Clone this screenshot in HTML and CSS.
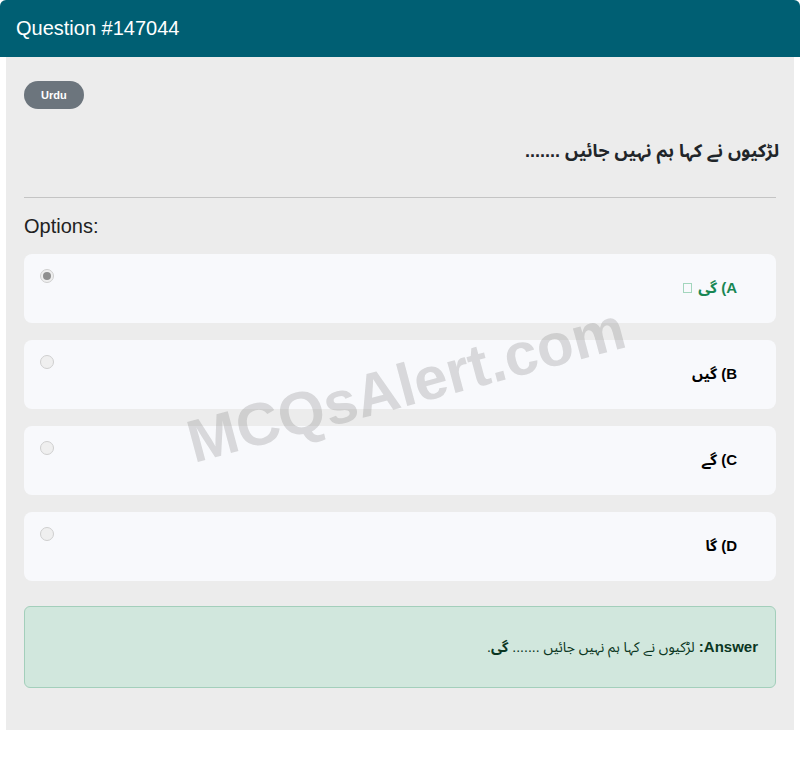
FILE: index.html
```html
<!DOCTYPE html>
<html lang="en">
<head>
<meta charset="utf-8">
<title>Question #147044</title>
<link rel="stylesheet" href="styles.css">
</head>
<body>
<div class="card">
  <div class="card-header">Question #147044</div>
  <div class="card-body">
    <div class="badge-row"><span class="badge">Urdu</span></div>
    <div class="question" dir="rtl">لڑکیوں نے کہا ہم نہیں جائیں .......</div>
    <hr class="divider">
    <div class="options-title">Options:</div>
    <div class="options">
      <div class="option">
        <span class="radio checked"></span>
        <div class="label correct" dir="rtl">A) گی <span class="tofu"></span></div>
      </div>
      <div class="option">
        <span class="radio"></span>
        <div class="label" dir="rtl">B) گیں</div>
      </div>
      <div class="option">
        <span class="radio"></span>
        <div class="label" dir="rtl">C) گے</div>
      </div>
      <div class="option">
        <span class="radio"></span>
        <div class="label" dir="rtl">D) گا</div>
      </div>
    </div>
    <div class="answer" dir="rtl"><strong>Answer:</strong> <span class="answer-text">لڑکیوں نے کہا ہم نہیں جائیں ....... <strong>گی</strong>.</span></div>
    <div class="watermark">MCQsAlert.com</div>
  </div>
</div>
</body>
</html>
```
FILE: styles.css
```css
html, body {
  margin: 0;
  padding: 0;
  background: #ffffff;
}
body {
  font-family: "Liberation Sans", "Noto Sans Arabic", "Noto Naskh Arabic", "DejaVu Sans", Arial, sans-serif;
  color: #212529;
}
.card {
  width: 800px;
}
.card-header {
  height: 57px;
  line-height: 57px;
  background: #005f73;
  color: #ffffff;
  font-size: 20px;
  padding-left: 16px;
  border-radius: 6px 6px 0 0;
  box-sizing: border-box;
}
.card-body {
  position: relative;
  margin: 0 6px;
  background: #ececec;
  padding: 24px 18px 42px;
  display: flex;
  flex-direction: column;
}
.badge-row {
  display: flex;
}
.badge {
  display: inline-block;
  background: #6c757d;
  color: #ffffff;
  font-size: 11px;
  font-weight: bold;
  height: 28px;
  line-height: 28px;
  padding: 0 17px;
  border-radius: 14px;
}
.question {
  margin-top: 29px;
  font-size: 18px;
  line-height: 27px;
  font-weight: bold;
  text-align: right;
  color: #212529;
  margin-right: -3px;
}
.divider {
  margin: 32px 0 0;
  border: 0;
  border-top: 1px solid #c4c4c4;
  height: 0;
}
.options-title {
  margin-top: 16px;
  font-size: 20px;
  line-height: 24px;
  color: #222222;
}
.options {
  margin-top: 16px;
  display: flex;
  flex-direction: column;
  gap: 17px;
}
.option {
  height: 69px;
  box-sizing: border-box;
  background: #f8f9fc;
  border-radius: 8px;
  padding: 15px 39px 0 16px;
  display: flex;
  align-items: flex-start;
}
.radio {
  flex: none;
  width: 14px;
  height: 14px;
  box-sizing: border-box;
  border: 1px solid #cfcfcf;
  border-radius: 50%;
  background: #efefef;
  display: flex;
  align-items: center;
  justify-content: center;
}
.radio.checked::after {
  content: "";
  width: 8px;
  height: 8px;
  border-radius: 50%;
  background: #8f8f8f;
}
.label {
  flex: 1;
  margin-top: 9px;
  font-size: 15px;
  line-height: 20px;
  font-weight: bold;
  text-align: right;
  color: #000000;
}
.label.correct {
  color: #198754;
}
.tofu {
  display: inline-block;
  width: 7px;
  height: 8px;
  border: 1px solid #a3d6bd;
  vertical-align: 0;
  margin-right: 2px;
}
.answer {
  margin-top: 25px;
  height: 82px;
  box-sizing: border-box;
  background: #d1e7dd;
  border: 1px solid #a3cfbb;
  border-radius: 6px;
  color: #0a3622;
  font-size: 15px;
  line-height: 20px;
  padding: 30px 17px 0;
  text-align: right;
}
.answer-text {
  font-size: 14px;
}
.watermark {
  position: absolute;
  left: 400px;
  top: 328px;
  transform: translate(-50%, -50%) rotate(-15deg);
  font-size: 60px;
  font-weight: bold;
  color: rgba(120, 120, 120, 0.25);
  white-space: nowrap;
  pointer-events: none;
}
```
